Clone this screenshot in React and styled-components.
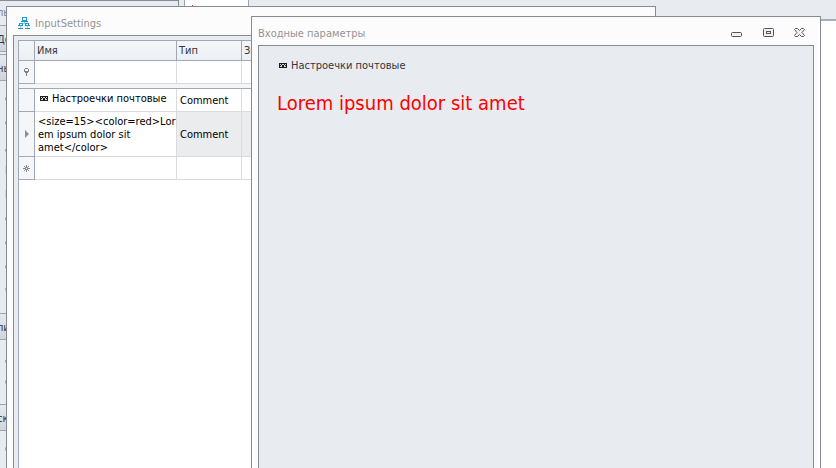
import React from 'react';
import styled, { createGlobalStyle } from 'styled-components';

const GlobalStyle = createGlobalStyle`
  * {
    box-sizing: border-box;
  }

  body {
    margin: 0;
    overflow: hidden;
    font-family: 'DejaVu Sans Condensed', 'Noto Sans', sans-serif;
    font-size: 11px;
    line-height: 13px;
    color: #000;
  }

  button {
    font: inherit;
    color: inherit;
  }
`;

const Desktop = styled.div`
  position: relative;
  display: flex;
  height: 100vh;
  overflow: hidden;
  background: #e8ecf1;
`;

const Sidebar = styled.nav`
  width: 179px;
  display: flex;
  flex-direction: column;
  overflow: hidden;
  border-top: 1px solid #868a93;
  border-right: 1px solid #868a93;
  white-space: nowrap;
`;

const SideTitle = styled.div`
  flex: none;
  height: 24px;
  padding-top: 5px;
  color: #76818f;
  text-indent: -3px;
`;

const SideGroup = styled.button`
  flex: none;
  height: 27px;
  margin-bottom: ${(p) => (p.$spaced ? '2px' : '0')};
  padding: 2px 0 0;
  border: 0;
  border-top: 1px solid #9da4b0;
  border-bottom: 1px solid #9da4b0;
  background: linear-gradient(#e6eaef, #cfd5de);
  color: #333a48;
  text-align: left;
  text-indent: -3px;
`;

const SideList = styled.div`
  flex: none;
  display: flex;
  flex-direction: column;
  padding: 5px 0 11px 5px;
`;

const SideItem = styled.button`
  flex: none;
  height: 24px;
  padding: 0;
  border: 0;
  background: none;
  color: #2b2b66;
  text-align: left;
`;

const Workspace = styled.main`
  flex: 1;
  display: flex;
  flex-direction: column;
`;

const TabStrip = styled.div`
  height: 21px;
  padding-left: 5px;
  border-bottom: 2px solid #a9afba;
`;

const Tab = styled.div`
  width: 65px;
  height: 100%;
  padding: 5px 7px;
  border: solid #9da4b0;
  border-width: 0 1px;
  background: #fff;

  svg {
    display: block;
  }
`;

const Document = styled.div`
  flex: 1;
  background: #fff;
`;

const Window = styled.section`
  position: absolute;
  top: ${(p) => p.$top}px;
  bottom: -20px;
  left: ${(p) => p.$left}px;
  width: ${(p) => p.$width}px;
  display: flex;
  flex-direction: column;
  padding: 0 6px 6px;
  border: 1px solid #868b93;
  background: #fcfcfc;
`;

const TitleBar = styled.header`
  flex: none;
  display: flex;
  align-items: center;
  height: 28px;
  padding: ${(p) => (p.$icon ? '4px 0 0 5px' : '4px 8px 0 0')};
  gap: 5px;
  color: #949494;
`;

const Title = styled.h1`
  flex: 1;
  margin: 0;
  font-size: 11px;
  font-weight: normal;
`;

const Controls = styled.div`
  display: flex;
  gap: 20px;
`;

const ControlButton = styled.button`
  display: flex;
  width: 12px;
  height: 10px;
  padding: 0;
  border: 0;
  background: none;
`;

const Client = styled.div`
  flex: 1;
  padding: ${(p) => (p.$form ? '13px 18px' : '4px')};
  border: 1px solid #868b93;
  background: #e8ecf1;
`;

const GridPanel = styled.div`
  height: 100%;
  border: 1px solid #a0a8b5;
  background: #fff;
`;

const Table = styled.table`
  width: 100%;
  table-layout: fixed;
  border-collapse: separate;
  border-spacing: 0;
`;

const Row = styled.tr`
  height: ${(p) => p.$height}px;
`;

const HeadCell = styled.th`
  width: ${(p) => (p.$width ? `${p.$width}px` : 'auto')};
  padding: 0 2px;
  border-right: 1px solid #a0a8b5;
  border-bottom: 1px solid #a0a8b5;
  background: linear-gradient(#f4f6f9, #eceff4);
  color: #32363d;
  font-weight: normal;
  text-align: left;
`;

const Cell = styled.td`
  padding: 0 3px;
  border-right: 1px solid #d9dbde;
  border-bottom: 1px solid #d9dbde;
  background: ${(p) => (p.$focused ? '#ebecee' : '#fff')};
  white-space: pre;
`;

const Indicator = styled.td`
  padding: 0;
  border-right: 1px solid #a0a8b5;
  border-bottom: 1px solid #a0a8b5;
  background: #f4f6f9;
  text-align: center;

  svg {
    display: block;
    margin: 0 auto;
  }
`;

const Divider = styled.td`
  padding: 0;
  border-bottom: 1px solid #a0a8b5;
  background: #f4f5f7;
`;

const Caption = styled.span`
  display: flex;
  align-items: center;
  gap: 4px;
  padding: 0 0 3px 2px;
`;

const FormCaption = styled(Caption)`
  color: #32363d;
`;

const RedText = styled.p`
  margin: 15px 0 0;
  color: #f00;
  font-size: 20px;
  line-height: 26px;
`;

const MailIcon = () => (
  <svg width="8" height="6" shapeRendering="crispEdges">
    <path d="M0 0h8v5H0z" fill="#1c1c1c" />
    <path d="M1 1h1v1H1zM3 1h2v1H3zM6 1h1v1H6zM1 3h2v1H1zM5 3h2v1H5zM2 2h1v1H2zM5 2h1v1H5z" fill="#d8d8d8" />
  </svg>
);

const TreeIcon = () => (
  <svg width="12" height="12" shapeRendering="crispEdges">
    <path d="M4 0h5v1H4zM4 1h1v2H4zM8 1h1v2H8zM4 3h5v1H4zM1 6h4v1H1zM1 7h1v2H1zM4 7h1v2H4zM7 6h4v1H7zM7 7h1v2H7zM10 7h1v2h-1z" fill="#1ba0dc" />
    <path d="M3 4h7v1H3zM0 8h5v1H0zM7 8h5v1H7zM0 11h5v1H0zM7 11h5v1H7z" fill="#2793bd" />
    <path d="M6 5h1v1H6zM5 6h2v1H5zM2 9h1v2H2zM9 9h1v2H9z" fill="#8fd4f1" />
  </svg>
);

const PinIcon = () => (
  <svg width="7" height="8" shapeRendering="crispEdges" fill="#7d828b">
    <path d="M2 0h3v1H2zM1 1h1v2H1zM5 1h1v2H5zM1 3h5v1H1zM2 4h3v1H2zM3 5h1v3H3z" />
  </svg>
);

const ArrowIcon = () => (
  <svg width="5" height="8">
    <path d="M1 0v8l4-4z" fill="#8b9099" />
  </svg>
);

const StarIcon = () => (
  <svg width="7" height="7" shapeRendering="crispEdges" fill="#858a93">
    <path d="M3 0h1v2H3zM3 5h1v2H3zM0 3h2v1H0zM5 3h2v1H5zM1 1h1v1H1zM5 1h1v1H5zM1 5h1v1H1zM5 5h1v1H5zM2 2h3v1H2zM2 4h3v1H2zM2 3h1v1H2zM4 3h1v1H4z" />
  </svg>
);

const MinimizeIcon = () => (
  <svg width="12" height="10" fill="#f0f1f3" stroke="#50555d">
    <rect x="1.500" y="4.500" width="10" height="4" rx="1" />
  </svg>
);

const MaximizeIcon = () => (
  <svg width="12" height="10" fill="#f0f1f3" stroke="#50555d">
    <rect x="1.500" y="0.500" width="10" height="8" rx="1" />
    <rect x="4.500" y="3.500" width="4" height="2" />
  </svg>
);

const CloseIcon = () => (
  <svg width="12" height="10" fill="#f0f1f3" stroke="#50555d">
    <path d="M1.500 0.500h2l2 2 2-2h2l1 1-2.500 3 2.500 3-1 1h-2l-2-2-2 2h-2l-1-1 2.500-3-2.500-3z" />
  </svg>
);

const groups = [
  { name: 'ны', items: ['о', 'о', 'д', 'Б', 'Б', 'о', 'о', 'о', 'ч'] },
  { name: 'ли', items: ['д', 'о'] },
  { name: 'ск', items: ['о'] },
];

const comment = '<size=15><color=red>Lor\nem ipsum dolor sit\namet</color>';

const App = () => (
  <>
    <GlobalStyle />
    <Desktop>
      <Sidebar>
        <SideTitle>ль</SideTitle>
        <SideGroup $spaced>Де</SideGroup>
        {groups.map((group) => (
          <React.Fragment key={group.name}>
            <SideGroup>{group.name}</SideGroup>
            <SideList>
              {group.items.map((item, i) => (
                <SideItem key={i}>{item}</SideItem>
              ))}
            </SideList>
          </React.Fragment>
        ))}
      </Sidebar>
      <Workspace>
        <TabStrip>
          <Tab>
            <svg width="3" height="3"><path d="M0 0h1v1H0z" fill="#d33" /></svg>
          </Tab>
        </TabStrip>
        <Document />
      </Workspace>

      <Window $left={6} $top={6} $width={650}>
        <TitleBar $icon>
          <TreeIcon />
          <Title>InputSettings</Title>
        </TitleBar>
        <Client>
          <GridPanel>
            <Table>
              <thead>
                <Row $height={20}>
                  <HeadCell $width={16} />
                  <HeadCell $width={142}>Имя</HeadCell>
                  <HeadCell $width={65}>Тип</HeadCell>
                  <HeadCell>Значение</HeadCell>
                </Row>
              </thead>
              <tbody>
                <Row $height={23}>
                  <Indicator><PinIcon /></Indicator>
                  <Cell />
                  <Cell />
                  <Cell />
                </Row>
                <Row $height={5}>
                  <Divider colSpan={4} />
                </Row>
                <Row $height={23}>
                  <Indicator />
                  <Cell>
                    <Caption><MailIcon />Настроечки почтовые</Caption>
                  </Cell>
                  <Cell>Comment</Cell>
                  <Cell />
                </Row>
                <Row $height={45}>
                  <Indicator><ArrowIcon /></Indicator>
                  <Cell>{comment}</Cell>
                  <Cell $focused>Comment</Cell>
                  <Cell $focused />
                </Row>
                <Row $height={23}>
                  <Indicator><StarIcon /></Indicator>
                  <Cell />
                  <Cell />
                  <Cell />
                </Row>
              </tbody>
            </Table>
          </GridPanel>
        </Client>
      </Window>

      <Window $left={251} $top={16} $width={570}>
        <TitleBar>
          <Title>Входные параметры</Title>
          <Controls>
            <ControlButton aria-label="Свернуть"><MinimizeIcon /></ControlButton>
            <ControlButton aria-label="Развернуть"><MaximizeIcon /></ControlButton>
            <ControlButton aria-label="Закрыть"><CloseIcon /></ControlButton>
          </Controls>
        </TitleBar>
        <Client $form>
          <FormCaption><MailIcon />Настроечки почтовые</FormCaption>
          <RedText>Lorem ipsum dolor sit amet</RedText>
        </Client>
      </Window>
    </Desktop>
  </>
);

export default App;
